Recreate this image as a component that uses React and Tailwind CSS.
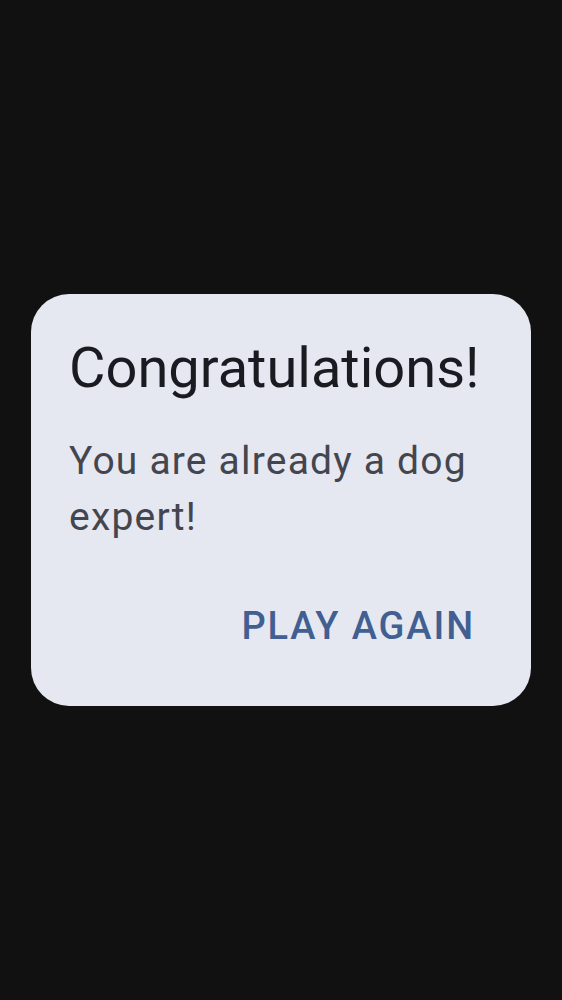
export default function App() {
  return (
    <div className="min-h-screen w-full bg-[#111111] flex items-center justify-center" style={{ fontFamily: "Roboto, 'Noto Sans', sans-serif" }}>
      <div className="w-[500px] h-[412px] rounded-[38px] bg-[#e6e8f1] pl-[38px] pr-[38px] pt-[36px] flex flex-col">
        <h1 className="text-[56px] leading-[76px] text-[#1a1b20] font-normal whitespace-nowrap">Congratulations!</h1>
        <p className="mt-[27px] text-[39px] leading-[56px] tracking-[1.2px] text-[#44464f]">You are already a dog expert!</p>
        <div className="mt-[58px] flex justify-end">
          <button className="px-[18px] text-[38px] leading-[47.5px] font-medium text-[#415f91] tracking-[1.9px]">PLAY AGAIN</button>
        </div>
      </div>
    </div>
  );
}
